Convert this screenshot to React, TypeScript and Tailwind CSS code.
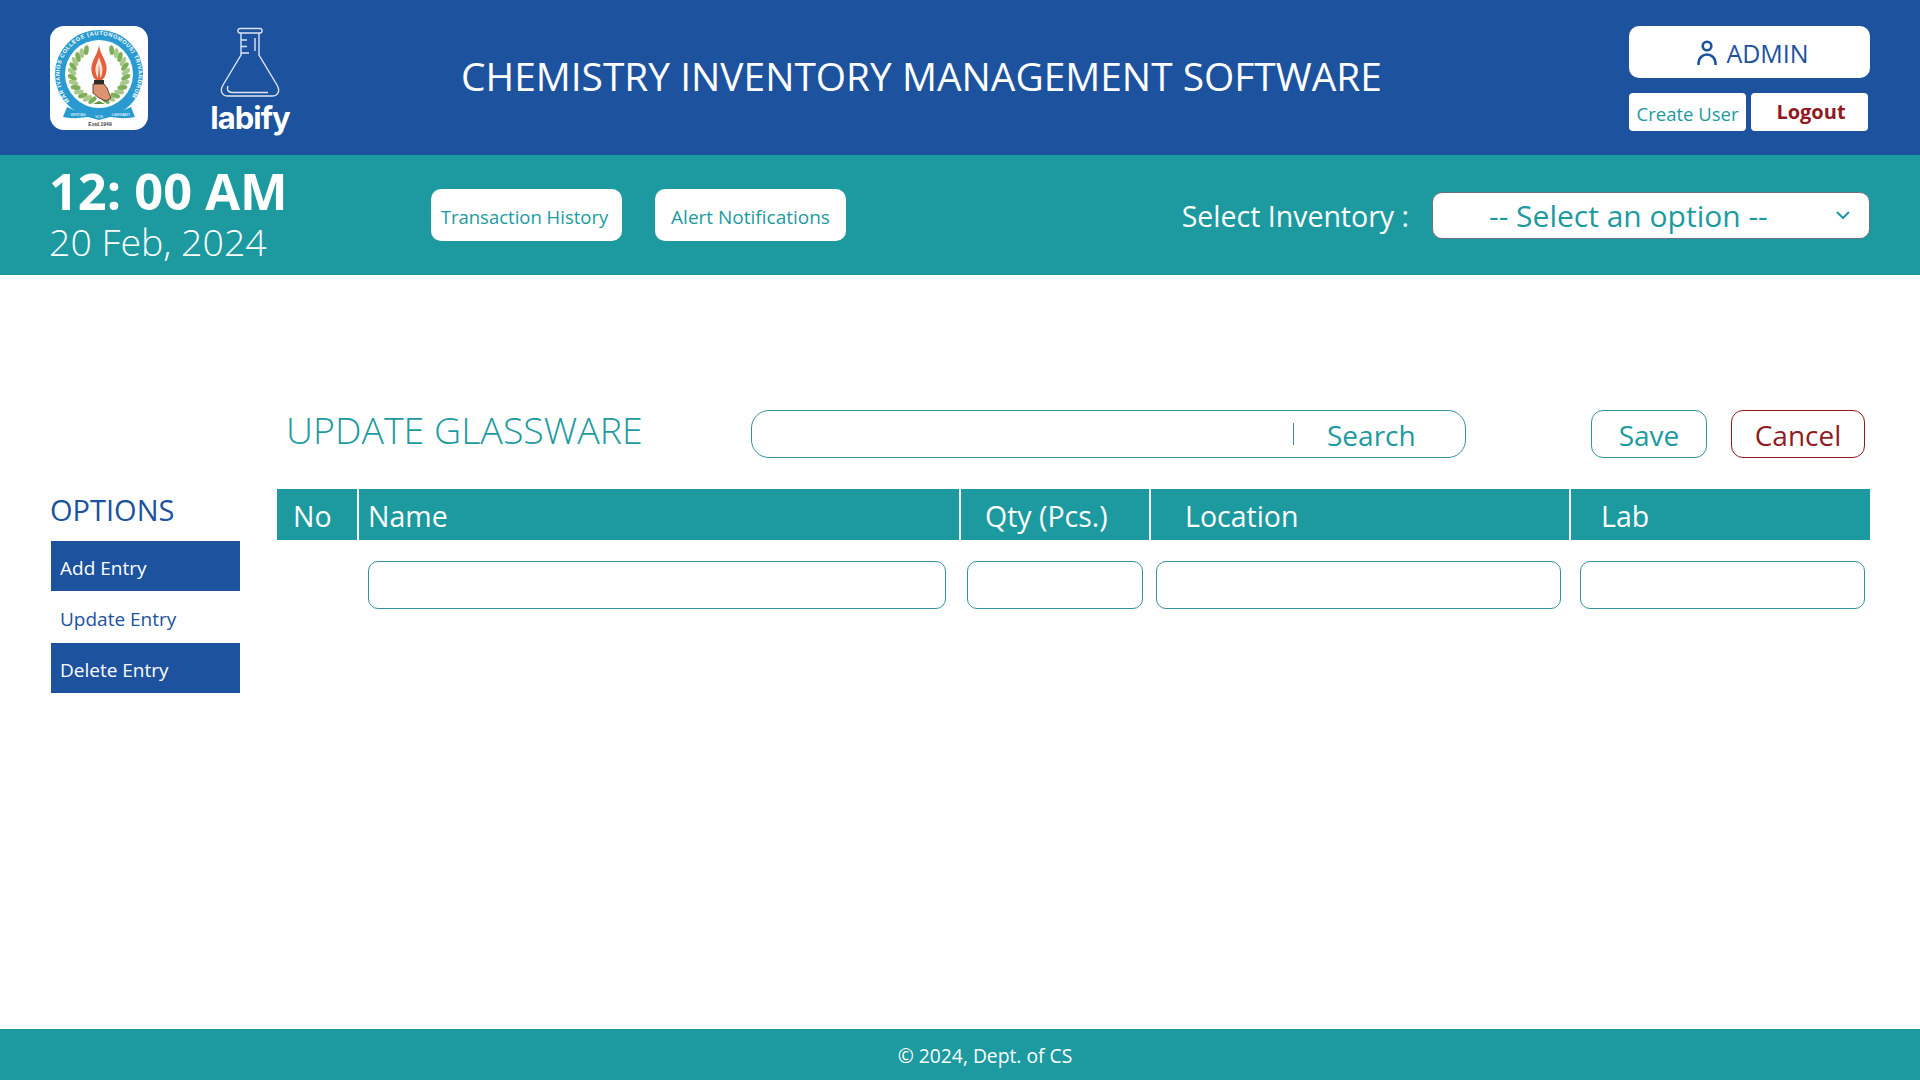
import React from "react";

// wreath leaves, skipping the gap at the top of the ring
const leaves = Array.from({ length: 26 }, (_, i) => {
  const side = i % 2 === 0 ? -1 : 1;
  const step = Math.floor(i / 2);
  const a = ((28 + step * 11.5) * side * Math.PI) / 180;
  const r = 27;
  return {
    x: 49 + r * Math.sin(a),
    y: 48 - r * Math.cos(a),
    rot: (a * 180) / Math.PI + 55 * side,
    even: step % 2 === 0,
  };
});

const CollegeLogo = () => (
  <div className="w-[98px] h-[104px] bg-white rounded-[14px] overflow-hidden">
    <svg width="98" height="104" viewBox="0 0 98 104">
      <defs>
        <path id="ringText" d="M 21 76.5 A 39.5 39.5 0 1 1 77 76.5" />
      </defs>
      <circle cx="49" cy="48" r="44" fill="#2a9bd0" />
      <circle cx="49" cy="48" r="34" fill="#fff" />
      <text fontSize="5.6" fontWeight="700" fill="#fff" fontFamily="'Liberation Sans', sans-serif">
        <textPath href="#ringText" startOffset="2" textLength="176" lengthAdjust="spacing">
          MAR IVANIOS COLLEGE (AUTONOMOUS) TRIVANDRUM
        </textPath>
      </text>
      {leaves.map((l, i) => (
        <ellipse
          key={i}
          cx={l.x}
          cy={l.y}
          rx="5"
          ry="2.4"
          fill={l.even ? "#7fae5a" : "#a9c98c"}
          transform={`rotate(${l.rot} ${l.x} ${l.y})`}
        />
      ))}
      <path d="M49 19c-1 8-5 12-7 19-2 7 1 14 4 16h6c3-2 6-9 4-16-2-7-6-11-7-19z" fill="#e2603c" />
      <path d="M49 31c-1 4-3 7-3.5 11-.4 4 1 8 2.5 10 .6-5 .4-9 1-13 .6 4 .8 8 1.200 13 1.500-2 2.600-6 2.200-10-.5-4-2.400-7-3.400-11z" fill="#fbe3d6" />
      <rect x="44" y="54" width="10" height="4" fill="#2b2b2b" />
      <path d="M43 58h11l3 4 4 10-5 3-7-3-6-5z" fill="#dd9270" stroke="#3a2a22" strokeWidth="0.8" />
      <path d="M49 75l-6 3h12z" fill="#5c9440" />
      <path d="M17 81q16 8 32 6 16 2 32-6l4 10q-10 2-15 1l-10-1-11 3-11-3-10 1q-5 1-15-1z" fill="#2a9bd0" />
      <text x="28" y="90" textAnchor="middle" fontSize="3.6" fill="#fff" fontFamily="'Liberation Sans', sans-serif">VERITAS</text>
      <text x="49" y="92" textAnchor="middle" fontSize="3.6" fill="#fff" fontFamily="'Liberation Sans', sans-serif">VOS</text>
      <text x="71" y="90" textAnchor="middle" fontSize="3.6" fill="#fff" fontFamily="'Liberation Sans', sans-serif">LIBERABIT</text>
      <text x="50" y="100" textAnchor="middle" fontSize="5" fontWeight="700" fill="#444" fontFamily="'Liberation Sans', sans-serif">Estd.1949</text>
    </svg>
  </div>
);

const FlaskLogo = () => (
  <div className="flex flex-col items-center w-[80px]">
    <svg width="60" height="71" viewBox="0 0 60 71" fill="none" stroke="#dbe6f5" strokeWidth="1.4">
      <rect x="18" y="1.500" width="24" height="4.500" rx="2" />
      <path d="M21 6v22L3 58c-3.500 6-1 11 5 11h44c6 0 8.500-5 5-11L39 28V6" />
      <path d="M8 59c-1.500 4 .5 6.500 4 6.500h36" />
      <path d="M21 13h6M21 19.500h6M21 26h8M35 24V11" />
    </svg>
    <span className="mt-[2px] text-[31px] leading-[35px] font-bold text-white font-['Inter',sans-serif] tracking-[-1px]">labify</span>
  </div>
);

const columns = [
  { label: "No", width: "w-[82px]", pad: "pl-4" },
  { label: "Name", width: "w-[602px]", pad: "pl-[9px]" },
  { label: "Qty (Pcs.)", width: "w-[190px]", pad: "pl-[24px]" },
  { label: "Location", width: "w-[420px]", pad: "pl-[34px]" },
  { label: "Lab", width: "flex-1", pad: "pl-[30px]" },
];

export default function App() {
  return (
    <div className="h-screen flex flex-col bg-white font-['Open_Sans','Noto_Sans',sans-serif] overflow-hidden">
      <header className="h-[155px] bg-[#1c529e] flex items-start pl-[50px] pr-[50px] text-white">
        <div className="mt-[26px]"><CollegeLogo /></div>
        <div className="mt-[27px] ml-[62px]"><FlaskLogo /></div>
        <h1 className="mt-[50px] ml-[171px] text-[38.900px] leading-[52px] font-normal whitespace-nowrap">
          CHEMISTRY INVENTORY MANAGEMENT SOFTWARE
        </h1>
        <div className="ml-auto mt-[26px] w-[241px]">
          <div className="h-[52px] bg-white rounded-[10px] flex items-center justify-center text-[#1c529e] text-[25px] gap-[9px] pl-[7px]">
            <svg width="20" height="25" viewBox="0 0 20 25" fill="none" stroke="#1c529e" strokeWidth="2.6">
              <circle cx="10" cy="6" r="4.300" />
              <path d="M1.500 25v-2a8.500 8.500 0 0 1 17 0v2" />
            </svg>
            <span className="pt-[3px]">ADMIN</span>
          </div>
          <div className="flex gap-[5px] mt-[15px]">
            <button className="w-[117px] h-[38px] pt-[3px] bg-white rounded-[4px] text-[#1c9a9f] text-[18.500px]">Create User</button>
            <button className="w-[117px] h-[38px] pl-[3px] bg-white rounded-[4px] text-[#8f1a1f] text-[20px] font-bold">Logout</button>
          </div>
        </div>
      </header>

      <div className="h-[120px] bg-[#1c9a9f] flex items-center pl-[50px] pr-[50px] text-white">
        <div className="w-[381px] pb-[4px]">
          <div className="ml-[-1px] text-[50.500px] leading-[57px] font-bold whitespace-nowrap">12: 00 AM</div>
          <div className="ml-[-1px] text-[37.500px] leading-[46px] font-light whitespace-nowrap">20 Feb, 2024</div>
        </div>
        <button className="w-[191px] h-[52px] pt-[3px] pr-[4px] bg-white rounded-[10px] text-[#1c9a9f] text-[18.500px]">Transaction History</button>
        <button className="w-[191px] h-[52px] pt-[4px] ml-[33px] bg-white rounded-[10px] text-[#1c9a9f] text-[19px]">Alert Notifications</button>
        <span className="ml-auto pt-[2px] text-[28.500px]">Select Inventory :</span>
        <div className="ml-[23px] w-[438px] h-[47px] bg-white rounded-[10px] border border-gray-500 flex items-center text-[#1c9a9f] text-[30px] pl-[56px] pr-[18px]">
          <span className="flex-1 pt-[1px]">-- Select an option --</span>
          <svg width="16" height="10" viewBox="0 0 16 10" fill="none" stroke="#1c9a9f" strokeWidth="2">
            <path d="M2 2l6 6 6-6" />
          </svg>
        </div>
      </div>

      <main className="flex-1 flex pl-[51px] pr-[50px]">
        <aside className="w-[189px] mt-[215px] shrink-0">
          <h2 className="text-[#1c529e] text-[29px] leading-[39px] pb-[12px] font-normal ml-[-1px]">OPTIONS</h2>
          <div className="h-[50px] pt-[4px] bg-[#1c529e] text-white text-[19px] flex items-center pl-[9px]">Add Entry</div>
          <div className="h-[52px] pt-[4px] text-[#1c529e] text-[19px] flex items-center pl-[9px]">Update Entry</div>
          <div className="h-[50px] pt-[4px] bg-[#1c529e] text-white text-[19px] flex items-center pl-[9px]">Delete Entry</div>
        </aside>
        <section className="flex-1 ml-[37px] mt-[135px]">
          <div className="flex items-center h-[48px]">
            <h2 className="ml-[9px] mb-[8px] w-[465px] text-[#1c9a9f] text-[37.500px] font-light whitespace-nowrap">UPDATE GLASSWARE</h2>
            <div className="w-[715px] h-[48px] border border-[#34919e] rounded-[18px] flex items-center">
              <span className="ml-[541px] w-px h-[22px] bg-[#34919e]" />
              <span className="ml-[33px] pt-[2px] text-[#1c9a9f] text-[28px]">Search</span>
            </div>
            <button className="ml-[125px] w-[116px] h-[48px] pt-[1px] border border-[#34919e] rounded-[12px] text-[#1c9a9f] text-[28px]">Save</button>
            <button className="ml-[24px] w-[134px] h-[48px] pt-[1px] border border-[#8f1a1f] rounded-[12px] text-[#8f1a1f] text-[28px]">Cancel</button>
          </div>
          <div className="flex mt-[31px] h-[51px] bg-[#1c9a9f] text-white text-[28.500px]">
            {columns.map((c, i) => (
              <div key={c.label} className={`${c.width} ${c.pad} pt-[4px] flex items-center ${i < columns.length - 1 ? "border-r-2 border-white" : ""}`}>
                {c.label}
              </div>
            ))}
          </div>
          <div className="flex mt-[21px] h-[48px]">
            <div className="ml-[91px] w-[578px] border border-[#34919e] rounded-[10px]" />
            <div className="ml-[21px] w-[176px] border border-[#34919e] rounded-[10px]" />
            <div className="ml-[13px] w-[405px] border border-[#34919e] rounded-[10px]" />
            <div className="ml-[19px] w-[285px] border border-[#34919e] rounded-[10px]" />
          </div>
        </section>
      </main>

      <footer className="h-[51px] pt-[3px] bg-[#1c9a9f] text-white text-[19.300px] flex items-center justify-center pl-[50px] shrink-0">
        © 2024, Dept. of CS
      </footer>
    </div>
  );
}
